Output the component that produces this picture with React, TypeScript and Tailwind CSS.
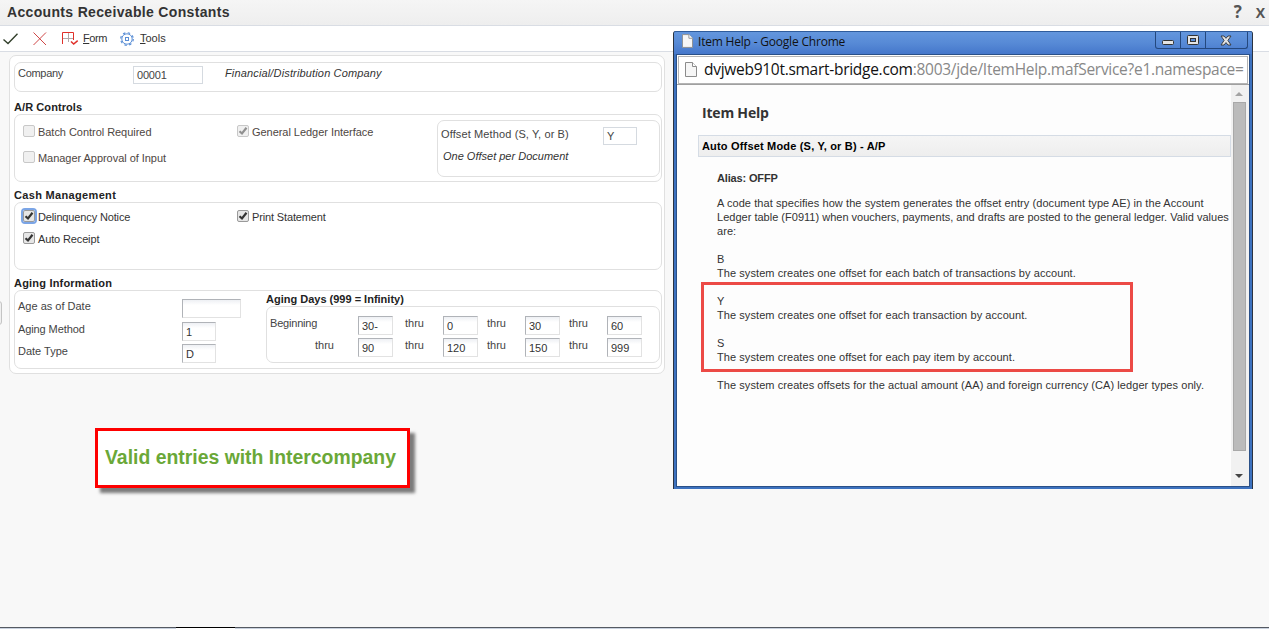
import type { ReactNode } from "react";

function Field({ value = "", className = "" }: { value?: string; className?: string }) {
  return (
    <div
      className={`shrink-0 h-[19px] border border-t-[#b0b3b8] border-l-[#b0b3b8] border-b-[#e2e2e2] border-r-[#e2e2e2] bg-gradient-to-b from-[#eef0f4] to-white to-30% pl-[3px] pt-[2px] text-[#333] ${className}`}
    >
      {value}
    </div>
  );
}

function ReadOnlyField({ value, className = "" }: { value: string; className?: string }) {
  return (
    <div className={`shrink-0 h-[18px] border border-[#d5dae0] bg-white pl-[3px] pt-px tracking-[-0.2px] ${className}`}>
      {value}
    </div>
  );
}

type CheckProps = { label: string; checked?: boolean; disabled?: boolean; focused?: boolean };

function Check({ label, checked, disabled, focused }: CheckProps) {
  return (
    <div className="flex h-[14px] items-start gap-[3px]">
      <span
        className={`block size-[12px] shrink-0 rounded-[2px] border ${
          disabled ? "border-[#c8c8c8] bg-[#f0f0f0]" : "border-[#9a9a9a] bg-[#e6e6e6]"
        } ${focused ? "outline-2 outline-[#7ba5e6]" : ""}`}
      >
        {checked && (
          <svg viewBox="0 0 10 10" className={disabled ? "block size-[10px] text-[#909090]" : "block size-[10px] text-[#333]"}>
            <path d="M1.5 5.2 4 7.5 8.5 1.8" fill="none" stroke="currentColor" strokeWidth="2.2" />
          </svg>
        )}
      </span>
      <span className={disabled ? "text-[#4e4642] tracking-[-0.04px]" : "text-[#333] tracking-[-0.14px]"}>{label}</span>
    </div>
  );
}

function Group({ className = "", children }: { className?: string; children?: ReactNode }) {
  return <div className={`w-[648px] rounded-[7px] border border-[#e0e0e0] ${className}`}>{children}</div>;
}

function Heading({ className = "", children }: { className?: string; children: ReactNode }) {
  return <h2 className={`font-bold text-[#222] ${className}`}>{children}</h2>;
}

function PageIcon({ className = "" }: { className?: string }) {
  return (
    <svg viewBox="0 0 12 15" className={className}>
      <path d="M.5.5h7l4 4v10H.5z" fill="#f6f6f6" stroke="#8c8c8c" />
      <path d="M7.5.5v4h4" fill="#fff" stroke="#8c8c8c" />
    </svg>
  );
}

function Toolbar() {
  return (
    <div className="flex h-[26px] items-start border-b border-[#d9dde4] bg-white text-[#333]">
      <svg viewBox="0 0 16 12" className="ml-[3px] mt-[7px] h-[12px] w-[16px]">
        <path d="M.5 6.5 5 10.5 14.5.8" fill="none" stroke="#33402c" strokeWidth="1.4" />
      </svg>
      <svg viewBox="0 0 14 14" className="ml-[14px] mt-[6px] size-[14px]">
        <path d="M.5.5 13 13M13 .5.5 13" fill="none" stroke="#cf4646" />
      </svg>
      <svg viewBox="0 0 17 15" className="ml-[15px] mt-[6px] h-[15px] w-[17px]">
        <path d="M6.5 1v9M1 6.5h10" fill="none" stroke="#b4a8a8" />
        <path d="M.5 12V.5h11V8" fill="none" stroke="#e0302a" />
        <path d="M9 9.5 11.7 12l4-3.3" fill="none" stroke="#e0302a" strokeWidth="1.5" />
      </svg>
      <span className="ml-[4px] mt-[5px] w-[37px] tracking-[-0.4px]">
        <u>F</u>orm
      </span>
      <svg viewBox="0 0 14 14" className="mt-[6px] size-[14px]" fill="none" stroke="#5b8fd6">
        <circle cx="7" cy="7" r="5.2" />
        <circle cx="7" cy="7" r="6.3" strokeWidth="1.2" strokeDasharray="2.47 2.48" />
        <rect x="5.5" y="5.5" width="3" height="3" />
      </svg>
      <span className="ml-[6px] mt-[5px]">
        <u>T</u>ools
      </span>
    </div>
  );
}

const agingRows = [
  { label: "Beginning", values: ["30-", "0", "30", "60"] },
  { label: "thru", values: ["90", "120", "150", "999"] },
];

function AgingRow({ label, values }: { label: string; values: string[] }) {
  return (
    <div className="flex h-[22px] items-start">
      <span className={label === "thru" ? "w-[88px] pl-[45px]" : "w-[88px] tracking-[-0.2px]"}>{label}</span>
      <Field value={values[0]} className="w-[35px]" />
      <span className="w-[50px] pl-[12px]">thru</span>
      <Field value={values[1]} className="w-[35px]" />
      <span className="w-[47px] pl-[9px]">thru</span>
      <Field value={values[2]} className="w-[35px]" />
      <span className="w-[47px] pl-[9px]">thru</span>
      <Field value={values[3]} className="w-[35px]" />
    </div>
  );
}

function ConstantsForm() {
  return (
    <div className="ml-[9px] mt-[3px] h-[319px] w-[656px] rounded-[7px] border border-[#e0e0e0] bg-white pl-[4px] pt-[6px] text-[#444]">
      <Group className="flex h-[30px] items-start pl-[3px] pt-[3px]">
        <span className="w-[115px] tracking-[-0.3px]">Company</span>
        <ReadOnlyField value="00001" className="w-[70px]" />
        <span className="ml-[22px] italic text-[#333] tracking-[0.15px]">Financial/Distribution Company</span>
      </Group>

      <Heading className="h-[22px] pt-[8px] tracking-[0.08px]">A/R Controls</Heading>
      <Group className="flex h-[68px] items-start pl-[8px] pt-[5px]">
        <div className="flex w-[214px] flex-col gap-[12px] pt-[5px]">
          <Check label="Batch Control Required" disabled />
          <Check label="Manager Approval of Input" disabled />
        </div>
        <div className="w-[200px] pt-[5px]">
          <Check label="General Ledger Interface" checked disabled />
        </div>
        <div className="h-[57px] w-[223px] rounded-[7px] border border-[#e0e0e0] pl-[3px] pt-[6px]">
          <div className="flex h-[22px] items-start">
            <span className="w-[162px] tracking-[0.12px]">Offset Method (S, Y, or B)</span>
            <ReadOnlyField value="Y" className="w-[34px]" />
          </div>
          <p className="pl-[2px] italic text-[#333]">One Offset per Document</p>
        </div>
      </Group>

      <Heading className="h-[20px] pt-[6px] tracking-[0.33px]">Cash Management</Heading>
      <Group className="flex h-[68px] items-start pl-[8px] pt-[7px]">
        <div className="flex w-[214px] flex-col gap-[8px]">
          <Check label="Delinquency Notice" checked focused />
          <Check label="Auto Receipt" checked />
        </div>
        <Check label="Print Statement" checked />
      </Group>

      <Heading className="h-[20px] pt-[6px] tracking-[0.2px]">Aging Information</Heading>
      <Group className="flex h-[79px] items-start pl-[3px]">
        <div className="w-[248px] pt-[8px]">
          <div className="flex h-[23px] items-start">
            <span className="w-[164px]">Age as of Date</span>
            <Field className="w-[59px]" />
          </div>
          <div className="flex h-[22px] items-start">
            <span className="w-[164px] tracking-[-0.1px]">Aging Method</span>
            <Field value="1" className="w-[34px]" />
          </div>
          <div className="flex h-[22px] items-start">
            <span className="w-[164px]">Date Type</span>
            <Field value="D" className="w-[34px]" />
          </div>
        </div>
        <div>
          <Heading className="h-[15px] pt-px">Aging Days (999 = Infinity)</Heading>
          <div className="h-[57px] w-[394px] rounded-[7px] border border-[#e0e0e0] pl-[3px] pt-[9px]">
            {agingRows.map((row) => (
              <AgingRow key={row.label} label={row.label} values={row.values} />
            ))}
          </div>
        </div>
      </Group>
    </div>
  );
}

const helpLines = [
  "A code that specifies how the system generates the offset entry (document type AE) in the Account",
  "Ledger table (F0911) when vouchers, payments, and drafts are posted to the general ledger. Valid values",
  "are:",
  "",
  "B",
  "The system creates one offset for each batch of transactions by account.",
  "",
  "Y",
  "The system creates one offset for each transaction by account.",
  "",
  "S",
  "The system creates one offset for each pay item by account.",
  "",
  "The system creates offsets for the actual amount (AA) and foreign currency (CA) ledger types only.",
];

function WindowButtons() {
  return (
    <div className="mr-[1px] flex h-[17px] w-[93px] rounded-b-[3px] border border-t-0 border-[#24487e]">
      <span className="flex w-[25px] items-center justify-center border-r border-[#24487e]">
        <svg viewBox="0 0 12 5" className="mt-[4px] h-[5px] w-[12px]">
          <rect x=".5" y=".5" width="11" height="4" rx="1" fill="#e4e4e4" stroke="#333" />
        </svg>
      </span>
      <span className="flex w-[25px] items-center justify-center border-r border-[#24487e]">
        <svg viewBox="0 0 12 10" className="h-[10px] w-[12px]">
          <rect x=".5" y=".5" width="11" height="9" rx="1" fill="#e4e4e4" stroke="#333" />
          <rect x="3.5" y="3.5" width="5" height="3" fill="#5b8ed8" stroke="#333" />
        </svg>
      </span>
      <span className="flex flex-1 items-center justify-center pr-[2px]">
        <svg viewBox="0 0 12 11" className="h-[11px] w-[12px]">
          <path d="M1 1h3l2 2.3L8 1h3L7.9 5.4 11 10H8L6 7.6 4 10H1l3.1-4.6z" fill="#e4e4e4" stroke="#333" strokeWidth=".9" />
        </svg>
      </span>
    </div>
  );
}

function HelpWindow() {
  return (
    <div className="absolute left-[673px] top-[31px] flex h-[458px] w-[580px] flex-col rounded-t-[3px] border-x border-[#2b3340] bg-[#3d72bf] px-[2px] pb-[2px] text-[#333]">
      <div className="-mx-[2px] flex h-[23px] shrink-0 items-start rounded-t-[2px] border-t border-[#2f5c9c] bg-gradient-to-b from-[#6396dd] via-[#578ad6] to-[#4577cb] pl-[8px] pr-[3px]">
        <PageIcon className="mt-[2px] h-[14px] w-[11px]" />
        <span className="ml-[5px] mt-[2px] flex-1 font-['Open_Sans',sans-serif] text-[12px] leading-[16px] tracking-[-0.2px] text-[#111]">
          Item Help - Google Chrome
        </span>
        <WindowButtons />
      </div>
      <div className="flex min-h-0 flex-1 flex-col border border-[#2a5088] bg-[#fdfdfd]">
        <div className="pt-px">
          <div className="mx-px flex h-[28px] items-start overflow-hidden border border-[#b4b4b4] bg-white pl-[6px]">
            <PageIcon className="mt-[5px] h-[15px] w-[12px] shrink-0" />
            <span className="ml-[7px] whitespace-nowrap font-['Open_Sans',sans-serif] text-[15.5px] leading-[25px] tracking-[-0.28px] text-[#888]">
              <span className="text-[#111]">dvjweb910t.smart-bridge.com</span>
              :8003/jde/ItemHelp.mafService?e1.namespace=
            </span>
          </div>
          <div className="h-px bg-[#a0a0a0]" />
        </div>
        <div className="flex min-h-0 flex-1">
          <div className="w-[554px] pl-[21px]">
            <h1 className="h-[50px] pl-[4px] pt-[18px] font-['Open_Sans',sans-serif] text-[14px] font-bold leading-[20px] tracking-[-0.2px]">
              Item Help
            </h1>
            <div className="h-[22px] border border-[#d5dce5] bg-gradient-to-b from-[#f5f5f5] to-[#eee] pl-[3px] pt-[3px] font-bold tracking-[0.18px] text-black">
              Auto Offset Mode (S, Y, or B) - A/P
            </div>
            <div className="pl-[19px] pt-[14px]">
              <p className="h-[25px] font-bold tracking-[-0.15px]">Alias: OFFP</p>
              {helpLines.map((line, i) => (
                <p key={i} className={`h-[14px] whitespace-nowrap ${i === 1 ? "tracking-[0.01px]" : "tracking-[0.07px]"}`}>
                  {line}
                </p>
              ))}
            </div>
          </div>
          <div className="flex flex-1 flex-col items-center bg-[#f1f1f1] pr-[2px]">
            <svg viewBox="0 0 8 4" className="mt-[7px] h-[4px] w-[8px]">
              <path d="M0 4 4 0 8 4z" fill="#a3a3a3" />
            </svg>
            <div className="mt-[6px] h-[349px] w-[13px] border border-[#a8a8a8] bg-[#bbb]" />
            <svg viewBox="0 0 8 4" className="mt-[23px] h-[4px] w-[8px]">
              <path d="M0 0 4 4 8 0z" fill="#444" />
            </svg>
          </div>
        </div>
      </div>
      <div className="absolute left-[27px] top-[251px] h-[90px] w-[432px] border-3 border-[#ec4a46]" />
    </div>
  );
}

export default function App() {
  return (
    <div className="relative flex h-[629px] w-[1269px] flex-col overflow-hidden bg-[#f8f8f8] font-['Liberation_Sans',Arial,sans-serif] text-[11px] leading-[14px]">
      <header className="flex h-[26px] shrink-0 items-start border-b border-[#d9dde4] bg-gradient-to-b from-[#f5f5f5] to-[#eee] pl-[7px] pr-[4px] text-[#333]">
        <h1 className="flex-1 pt-[4px] text-[14px] font-bold leading-[16px] tracking-[0.33px]">Accounts Receivable Constants</h1>
        <span className="w-[22px] pt-[3px] font-['Open_Sans',sans-serif] text-[17px] font-bold leading-[18px] text-[#555]">?</span>
        <span className="pt-[4px] font-['Open_Sans',sans-serif] text-[14px] font-bold leading-[18px] text-[#555]">X</span>
      </header>
      <Toolbar />
      <ConstantsForm />

      <div className="ml-[95px] mt-[54px] h-[60px] w-[315px] border-3 border-[#fe0000] bg-white pl-[7px] pt-[14px] text-[19.4px] font-bold leading-[24px] text-[#6aa838] shadow-[5px_5px_3px_rgba(0,0,0,0.5)]">
        Valid entries with Intercompany
      </div>

      <footer className="mt-auto flex h-[2px] border-t border-[#555a62] bg-[#c9d1de]">
        <div className="-mt-px ml-[176px] h-[2px] w-[59px] border-t border-black bg-white" />
      </footer>

      <div className="absolute left-[-4px] top-[301px] h-[24px] w-[6px] rounded-[3px] border border-[#c4c4c4] bg-[#f0f0f0]" />
      <HelpWindow />
    </div>
  );
}
